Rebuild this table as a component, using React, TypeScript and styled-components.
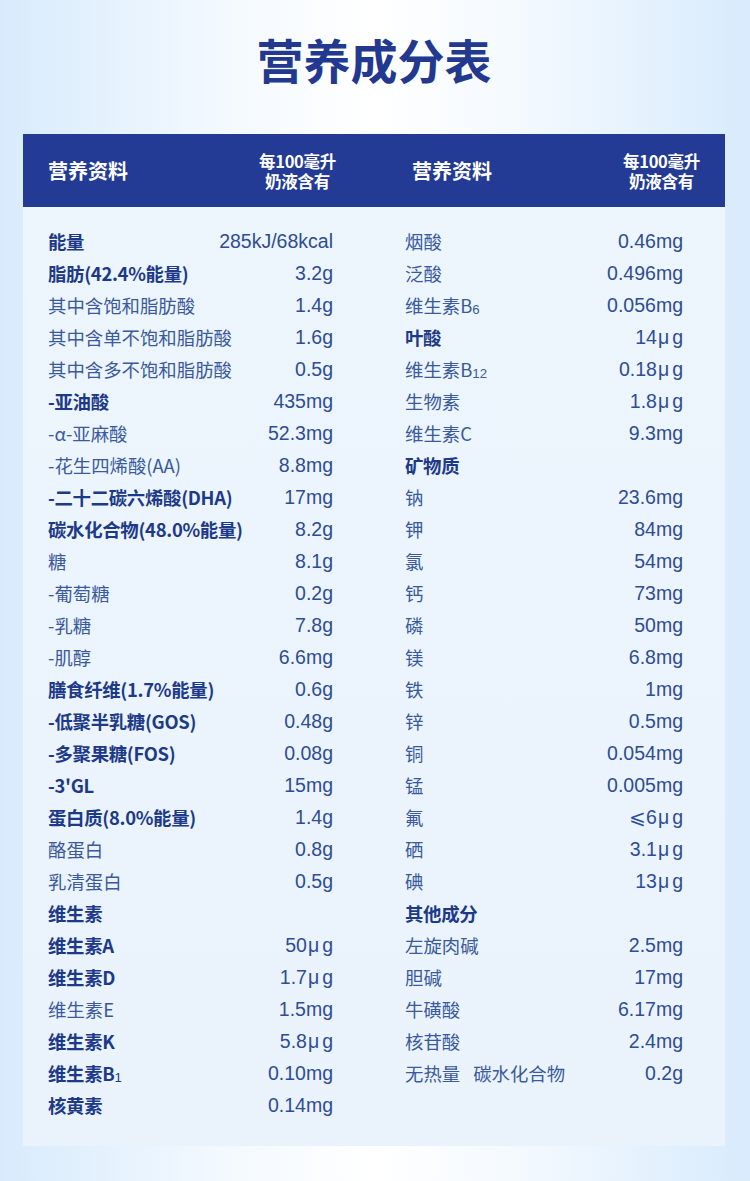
import React from "react";
import styled, { createGlobalStyle } from "styled-components";

const GlobalStyle = createGlobalStyle`
  html, body {
    margin: 0;
    padding: 0;
  }
  body {
    font-family: "Liberation Sans", "Noto Sans CJK SC", sans-serif;
  }
`;

const Page = styled.div`
  width: 750px;
  min-height: 1181px;
  box-sizing: border-box;
  padding: 35px 25px 35px 23px;
  background: linear-gradient(
    to right,
    #d8ebfc 0%,
    #f3f9ff 30%,
    #ffffff 50%,
    #f3f9ff 70%,
    #d8ebfc 100%
  );
`;

const Title = styled.h1`
  margin: 0 0 51px;
  text-align: center;
  font-family: "Noto Sans CJK SC", sans-serif;
  font-size: 47px;
  line-height: 48px;
  font-weight: 700;
  color: #22398f;
`;

const Panel = styled.div`
  background: linear-gradient(to bottom, #edf5fd, #eaf3fc);
`;

const Header = styled.div`
  height: 73px;
  background: #233b95;
  display: flex;
  align-items: center;
  gap: 72px;
  padding-left: 25px;
  color: #fff;
  font-family: "Noto Sans CJK SC", sans-serif;
  font-weight: 700;
`;

const HeadGroup = styled.div`
  width: 292px;
  display: flex;
  align-items: center;
  justify-content: space-between;
  padding-left: ${(p) => p.$indent ?? 0}px;
  box-sizing: border-box;
`;

const HeadLabel = styled.div`
  font-size: 20px;
  line-height: 24px;
`;

const HeadUnit = styled.div`
  width: 85px;
  display: flex;
  flex-direction: column;
  align-items: center;
  font-size: 16.5px;
  letter-spacing: -0.3px;
`;

const HeadLine = styled.span`
  display: block;
  line-height: 21px;
  height: 20px;
`;

const Body = styled.div`
  display: grid;
  grid-template-columns: 285px 278px;
  grid-auto-rows: 32px;
  column-gap: 72px;
  padding: 18px 0 25px 25px;
`;

const Row = styled.div`
  display: flex;
  align-items: center;
  justify-content: space-between;
  white-space: nowrap;
`;

const Name = styled.span`
  font-family: "Noto Sans CJK SC", sans-serif;
  font-size: 18.4px;
  font-weight: ${(p) => (p.$bold ? 700 : 400)};
  color: ${(p) => (p.$bold ? "#1d3a89" : "#3a5a9d")};
  letter-spacing: ${(p) => (p.$bold ? "-0.3px" : "0")};
`;

const Value = styled.span`
  font-family: "Liberation Sans", sans-serif;
  font-size: 19.5px;
  color: #2e4d95;
`;

const Sub = styled.span`
  font-size: 0.72em;
  vertical-align: -1px;
  font-family: "Liberation Sans", sans-serif;
  font-weight: 400;
`;

const Mu = styled.span`
  margin: 0 3px 0 1px;
`;

const Gap = styled.span`
  margin-left: 13px;
`;

type Item = { n: React.ReactNode; v?: React.ReactNode; b?: boolean };

const ug = (num: string) => (
  <>
    {num}
    <Mu>μ</Mu>g
  </>
);

const left: Item[] = [
  { n: "能量", v: "285kJ/68kcal", b: true },
  { n: "脂肪(42.4%能量)", v: "3.2g", b: true },
  { n: "其中含饱和脂肪酸", v: "1.4g" },
  { n: "其中含单不饱和脂肪酸", v: "1.6g" },
  { n: "其中含多不饱和脂肪酸", v: "0.5g" },
  { n: "-亚油酸", v: "435mg", b: true },
  { n: "-α-亚麻酸", v: "52.3mg" },
  { n: "-花生四烯酸(AA)", v: "8.8mg" },
  { n: "-二十二碳六烯酸(DHA)", v: "17mg", b: true },
  { n: "碳水化合物(48.0%能量)", v: "8.2g", b: true },
  { n: "糖", v: "8.1g" },
  { n: "-葡萄糖", v: "0.2g" },
  { n: "-乳糖", v: "7.8g" },
  { n: "-肌醇", v: "6.6mg" },
  { n: "膳食纤维(1.7%能量)", v: "0.6g", b: true },
  { n: "-低聚半乳糖(GOS)", v: "0.48g", b: true },
  { n: "-多聚果糖(FOS)", v: "0.08g", b: true },
  { n: "-3'GL", v: "15mg", b: true },
  { n: "蛋白质(8.0%能量)", v: "1.4g", b: true },
  { n: "酪蛋白", v: "0.8g" },
  { n: "乳清蛋白", v: "0.5g" },
  { n: "维生素", b: true },
  { n: "维生素A", v: ug("50"), b: true },
  { n: "维生素D", v: ug("1.7"), b: true },
  { n: "维生素E", v: "1.5mg" },
  { n: "维生素K", v: ug("5.8"), b: true },
  {
    n: (
      <>
        维生素B<Sub>1</Sub>
      </>
    ),
    v: "0.10mg",
    b: true,
  },
  { n: "核黄素", v: "0.14mg", b: true },
];

const right: Item[] = [
  { n: "烟酸", v: "0.46mg" },
  { n: "泛酸", v: "0.496mg" },
  {
    n: (
      <>
        维生素B<Sub>6</Sub>
      </>
    ),
    v: "0.056mg",
  },
  { n: "叶酸", v: ug("14"), b: true },
  {
    n: (
      <>
        维生素B<Sub>12</Sub>
      </>
    ),
    v: ug("0.18"),
  },
  { n: "生物素", v: ug("1.8") },
  { n: "维生素C", v: "9.3mg" },
  { n: "矿物质", b: true },
  { n: "钠", v: "23.6mg" },
  { n: "钾", v: "84mg" },
  { n: "氯", v: "54mg" },
  { n: "钙", v: "73mg" },
  { n: "磷", v: "50mg" },
  { n: "镁", v: "6.8mg" },
  { n: "铁", v: "1mg" },
  { n: "锌", v: "0.5mg" },
  { n: "铜", v: "0.054mg" },
  { n: "锰", v: "0.005mg" },
  { n: "氟", v: ug("⩽6") },
  { n: "硒", v: ug("3.1") },
  { n: "碘", v: ug("13") },
  { n: "其他成分", b: true },
  { n: "左旋肉碱", v: "2.5mg" },
  { n: "胆碱", v: "17mg" },
  { n: "牛磺酸", v: "6.17mg" },
  { n: "核苷酸", v: "2.4mg" },
  {
    n: (
      <>
        无热量<Gap>碳水化合物</Gap>
      </>
    ),
    v: "0.2g",
  },
];

const renderRow = (item: Item | undefined, key: string) =>
  item ? (
    <Row key={key}>
      <Name $bold={item.b}>{item.n}</Name>
      <Value>{item.v}</Value>
    </Row>
  ) : (
    <Row key={key} />
  );

const HeadCells = () => (
  <>
    <HeadLabel>营养资料</HeadLabel>
    <HeadUnit>
      <HeadLine>每100毫升</HeadLine>
      <HeadLine>奶液含有</HeadLine>
    </HeadUnit>
  </>
);

export default function App() {
  const rows: React.ReactNode[] = [];
  for (let i = 0; i < left.length; i++) {
    rows.push(renderRow(left[i], `l${i}`));
    rows.push(renderRow(right[i], `r${i}`));
  }

  return (
    <Page>
      <GlobalStyle />
      <Title>营养成分表</Title>
      <Panel>
        <Header>
          <HeadGroup>
            <HeadCells />
          </HeadGroup>
          <HeadGroup $indent={0}>
            <HeadCells />
          </HeadGroup>
        </Header>
        <Body>{rows}</Body>
      </Panel>
    </Page>
  );
}
